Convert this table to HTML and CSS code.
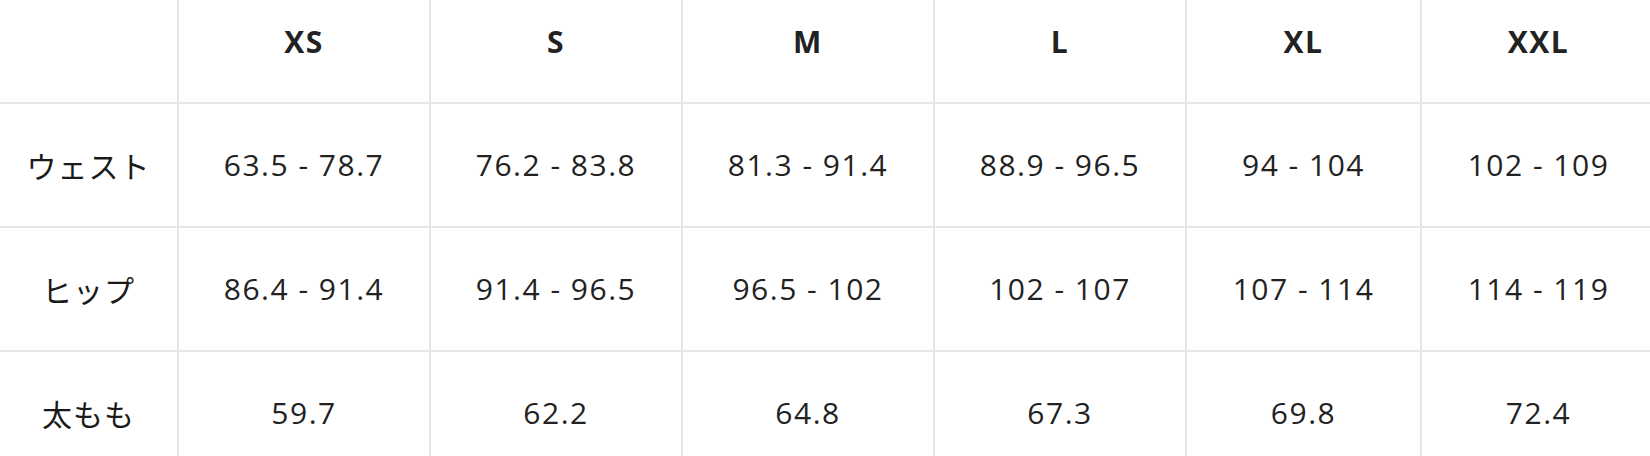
FILE: index.html
```html
<!DOCTYPE html>
<html lang="ja">
<head>
<meta charset="utf-8">
<title>サイズ表</title>
<link rel="stylesheet" href="styles.css">
</head>
<body>
<div class="size-table">
  <div class="cell head label"></div>
  <div class="cell head">XS</div>
  <div class="cell head">S</div>
  <div class="cell head">M</div>
  <div class="cell head">L</div>
  <div class="cell head">XL</div>
  <div class="cell head">XXL</div>

  <div class="cell label">ウェスト</div>
  <div class="cell">63.5 - 78.7</div>
  <div class="cell">76.2 - 83.8</div>
  <div class="cell">81.3 - 91.4</div>
  <div class="cell">88.9 - 96.5</div>
  <div class="cell">94 - 104</div>
  <div class="cell">102 - 109</div>

  <div class="cell label">ヒップ</div>
  <div class="cell">86.4 - 91.4</div>
  <div class="cell">91.4 - 96.5</div>
  <div class="cell">96.5 - 102</div>
  <div class="cell">102 - 107</div>
  <div class="cell">107 - 114</div>
  <div class="cell">114 - 119</div>

  <div class="cell label">太もも</div>
  <div class="cell">59.7</div>
  <div class="cell">62.2</div>
  <div class="cell">64.8</div>
  <div class="cell">67.3</div>
  <div class="cell">69.8</div>
  <div class="cell">72.4</div>
</div>
</body>
</html>
```

FILE: styles.css
```css
html, body {
  margin: 0;
  padding: 0;
  background: #ffffff;
  overflow: hidden;
}

body {
  font-family: "Open Sans", "Noto Sans CJK JP", sans-serif;
  color: #222222;
}

.size-table {
  display: grid;
  grid-template-columns: 177px 252px 252px 252px 252px 235px 235px;
  grid-template-rows: 102px repeat(3, 124px);
  width: 1655px;
}

.cell {
  box-sizing: border-box;
  display: flex;
  align-items: center;
  justify-content: center;
  border-left: 2px solid #e6e6e6;
  border-top: 2px solid #e6e6e6;
  font-size: 30px;
  letter-spacing: 1.5px;
  line-height: 1;
  white-space: nowrap;
}

.cell.label {
  border-left: none;
  letter-spacing: 1px;
  color: #1a1a1a;
  font-family: "Noto Sans CJK JP", sans-serif;
}

.cell.head {
  border-top: none;
  padding-bottom: 18px;
  font-weight: 700;
  letter-spacing: 1.5px;
}
```
